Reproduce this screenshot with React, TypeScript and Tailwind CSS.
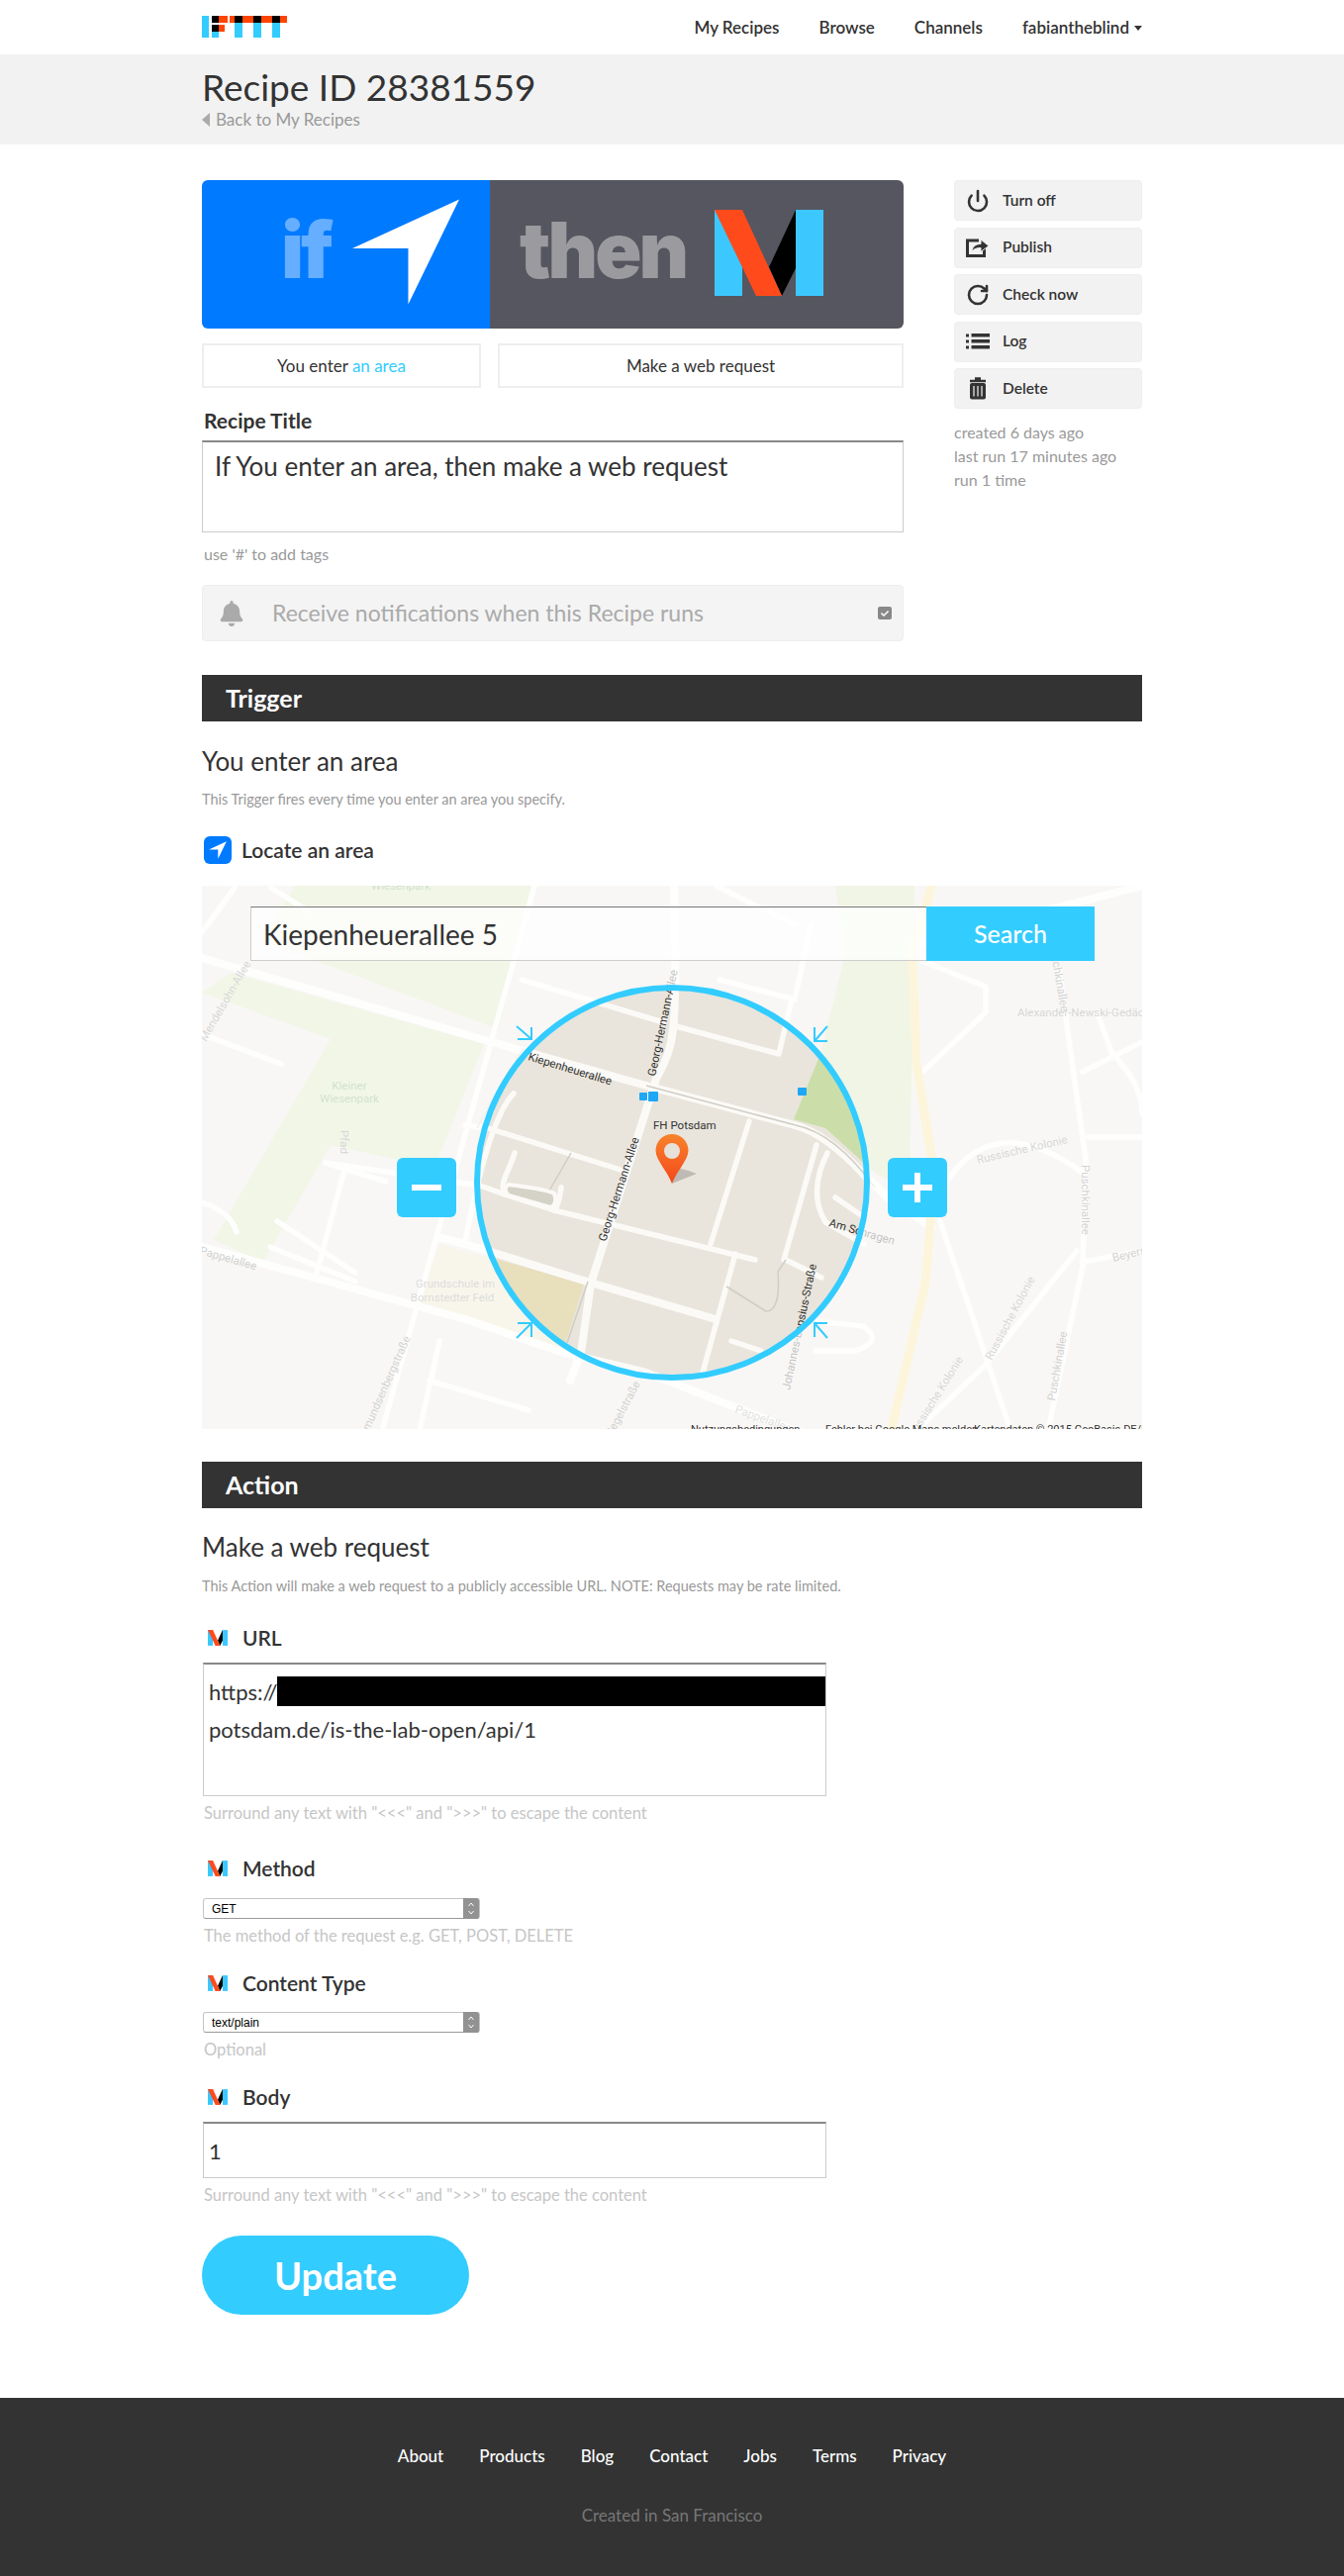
import { FaBell, FaCheck } from "react-icons/fa";
import { Power, RotateCw } from "lucide-react";

const blue = "#33ccff";

function Logo() {
    return (
        <svg width="87" height="23" viewBox="0 0 87 23" className="block">
            <rect x="0" y="0" width="7" height="22" fill="#33ccff" />
            <rect x="10" y="0" width="7" height="7" fill="#000" />
            <rect x="17" y="0" width="9" height="7" fill="#ff4400" />
            <rect x="10" y="9" width="7" height="7" fill="#000" />
            <rect x="17" y="9" width="6" height="7" fill="#ff4400" />
            <rect x="10" y="16" width="7" height="6" fill="#33ccff" />
            {[28, 47, 66].map((x) => (
                <g key={x}>
                    <rect x={x} y="0" width="20" height="7" fill="#ff4400" />
                    <rect x={x + 5} y="0" width="8" height="7" fill="#000" />
                    <rect x={x + 5} y="7" width="8" height="15" fill="#33ccff" />
                </g>
            ))}
        </svg>
    );
}

function MakerLogo({ className }: { className: string }) {
    return (
        <svg viewBox="0 0 110 87" className={className}>
            <rect x="0" y="0" width="28" height="87" fill="#3cc8ff" />
            <rect x="82" y="0" width="28" height="87" fill="#3cc8ff" />
            <polygon points="82,0 82,59 68,87 55,58" fill="#000" />
            <polygon points="0,0 28,0 68,87 42,87" fill="#ff4a1c" />
        </svg>
    );
}

function NavArrow({ className }: { className: string }) {
    return (
        <svg viewBox="0 0 110 107" className={className}>
            <polygon points="109,0 0,50 57,50 57,107" fill="#fff" />
        </svg>
    );
}

function PublishIcon() {
    return (
        <svg width="24" height="20" viewBox="0 0 24 20">
            <path d="M13 3H1.5v15.500h17V11" fill="none" stroke="#333" strokeWidth="3" />
            <path d="M6 14c.5-5 4-7.500 9-7.500V2l8 6.500-8 6V10.500c-4 0-7 1-9 3.500z" fill="#333" stroke="#f2f2f2" strokeWidth="1" />
        </svg>
    );
}

function ListIcon() {
    return (
        <svg width="24" height="16" viewBox="0 0 24 16">
            <rect x="0" y="0.500" width="3" height="3" fill="#333" />
            <rect x="0" y="6.500" width="3" height="3" fill="#333" />
            <rect x="0" y="12.500" width="3" height="3" fill="#333" />
            <rect x="5.500" y="0" width="18.500" height="3.500" fill="#333" />
            <rect x="5.500" y="6" width="18.500" height="3.500" fill="#333" />
            <rect x="5.500" y="12" width="18.500" height="3.500" fill="#333" />
        </svg>
    );
}

function TrashIcon() {
    return (
        <svg width="18" height="23" viewBox="0 0 18 23">
            <path d="M6 1.500h6M1 4h16" stroke="#333" strokeWidth="2.500" />
            <rect x="1" y="6" width="16" height="16.500" rx="2" fill="#333" />
            <path d="M5 9v10.500M9 9v10.500M13 9v10.500" stroke="#f2f2f2" strokeWidth="1.200" />
        </svg>
    );
}

const actions = [
    { label: "Turn off", icon: <Power size={24} strokeWidth={2.6} color="#333" /> },
    { label: "Publish", icon: <PublishIcon /> },
    { label: "Check now", icon: <RotateCw size={24} strokeWidth={2.6} color="#333" /> },
    { label: "Log", icon: <ListIcon /> },
    { label: "Delete", icon: <TrashIcon /> },
];

const mainRoads = [
    "M0 73L293 158L449 202L599 242Q630 250 669 292L694 316L737 345",
    "M477 0Q480 110 476 145Q474 170 459 195L393 402L383 472L372 500",
    "M0 365L266 438L366 472L449 492L608 554",
    "M238 355L266 362L389 400L519 438",
    "M718 60L950 0",
];

const sideRoads = [
    "M266 242L289 245L423 287",
    "M125 280L281 303L306 312L356 328L559 378",
    "M553 238L514 362",
    "M621 262L588 378",
    "M539 372L506 492",
    "M479 142L583 170L596 115",
    "M323 95L466 138",
    "M523 95L599 115L615 40",
    "M314 80L235 362L180 558",
    "M336 0L314 80",
    "M306 312C300 300 310 290 316 270",
    "M356 328C362 320 362 310 363 305",
    "M143 291L115 395",
    "M76 339L155 391",
    "M69 365L155 400",
    "M70 2L106 25",
    "M0 47L33 2",
    "M125 280L186 299",
    "M0 150L80 180",
    "M0 320Q30 330 35 350",
    "M315 210Q290 235 266 360",
    "M728 76L792 102L792 128L728 188",
    "M866 84L893 276L890 384L853 560",
    "M890 188L950 158",
    "M746 339L817 550",
    "M884 369L792 484L712 560",
    "M890 380L950 369",
    "M896 254L950 254",
    "M752 300Q800 225 890 290",
    "M590 378L626 396",
    "M632 270Q612 310 630 340L669 362",
    "M640 315L669 335",
    "M535 460L565 470",
    "M620 440L668 445Q690 460 660 470L620 470",
    "M230 500L330 530M240 460L220 550",
    "M520 0L599 40",
    "M905 130L920 170Q950 200 950 230",
];

const thinPaths = [
    "M278 245Q316 175 325 165",
    "M373 270L350 310",
    "M530 405L570 430Q585 430 582 390L590 378",
    "M449 202L600 242Q640 250 680 305",
    "M369 462L390 400",
];

const labels = [
    { x: 329, y: 176, r: 17, t: "Kiepenheuerallee" },
    { x: 408, y: 360, r: -72, t: "Georg-Hermann-Allee" },
    { x: 458, y: 193, r: -78, t: "Georg-Hermann-Allee" },
    { x: 456, y: 246, r: 0, t: "FH Potsdam" },
    { x: 633, y: 344, r: 16, t: "Am Schragen" },
    { x: 594, y: 510, r: -78, t: "Johannes-Lepsius-Straße" },
    { x: 538, y: 532, r: 20, t: "Pappelallee", c: "#999" },
    { x: 256, y: 406, r: 0, t: "Grundschule im", a: "middle", c: "#888" },
    { x: 253, y: 420, r: 0, t: "Bornstedter Feld", a: "middle", c: "#888" },
    { x: 149, y: 206, r: 0, t: "Kleiner", a: "middle", c: "#6b9a5a" },
    { x: 149, y: 219, r: 0, t: "Wiesenpark", a: "middle", c: "#6b9a5a" },
    { x: 201, y: 4, r: 0, t: "Wiesenpark", a: "middle", c: "#6b9a5a" },
    { x: 140, y: 247, r: 90, t: "Pfad", c: "#777" },
    { x: 824, y: 132, r: 0, t: "Alexander-Newski-Gedächtniskirche", c: "#777" },
    { x: 784, y: 281, r: -13, t: "Russische Kolonie", c: "#777" },
    { x: 889, y: 282, r: 90, t: "Puschkinallee", c: "#666" },
    { x: 921, y: 380, r: -14, t: "Beyerstraße", c: "#666" },
    { x: 798, y: 480, r: -62, t: "Russische Kolonie", c: "#777" },
    { x: 720, y: 558, r: -58, t: "Russische Kolonie", c: "#777" },
    { x: 862, y: 521, r: -80, t: "Puschkinallee", c: "#666" },
    { x: 414, y: 558, r: -62, t: "Hegelstraße", c: "#666" },
    { x: 166, y: 558, r: -66, t: "Amundsenbergstraße", c: "#666" },
    { x: -3, y: 372, r: 16, t: "Pappelallee", c: "#666" },
    { x: 4, y: 158, r: -60, t: "Mendelsohn-Allee", c: "#777" },
    { x: 856, y: 58, r: 80, t: "Puschkinallee", c: "#666" },
];

function MapArea() {
    const hole = "M0 0H950V550H0Z M278 300a197 197 0 1 0 394 0a197 197 0 1 0 -394 0Z";
    const arrows = [
        "M318 142L333 155M319 155H333V143",
        "M632 142L619 157M632 157H619V143",
        "M318 457L333 442M319 442H333V456",
        "M632 457L619 442M632 442H619V456",
    ];
    return (
        <svg viewBox="0 0 950 549" className="block w-full h-full font-[Roboto,sans-serif]">
            <defs>
                <linearGradient id="pin" x1="0" y1="0" x2="0" y2="1">
                    <stop offset="0" stopColor="#f8832c" />
                    <stop offset="1" stopColor="#f4471a" />
                </linearGradient>
            </defs>
            <rect width="950" height="549" fill="#e9e5dc" />
            <polygon points="94,0 336,0 300,145 60,55" fill="#cfdfb0" />
            <polygon points="30,88 285,160 235,285 130,262 62,380 12,358 130,155 0,108" fill="#cfdfb0" />
            <polygon points="625,170 650,70 640,0 720,0 715,310 680,290 630,245 598,236" fill="#cbdeaa" />
            <polygon points="240,362 386,402 365,470 215,425" fill="#e8dfbc" />
            <g fill="none" stroke="#fbfaf7" strokeLinecap="round" strokeLinejoin="round">
                <g strokeWidth="5.500">
                    {sideRoads.map((d) => <path key={d} d={d} />)}
                </g>
                <g strokeWidth="8">
                    {mainRoads.map((d) => <path key={d} d={d} />)}
                </g>
            </g>
            <g fill="none" stroke="#d0cdc3" strokeWidth="1.500">
                {thinPaths.map((d) => <path key={d} d={d} />)}
            </g>
            <rect x="300" y="310" width="0" height="0" />
            <path d="M737 0L718 69L722 180L740 291L731 402L694 560" fill="none" stroke="#f5dd86" strokeWidth="9" />
            <path d="M356 311Q350 307 310 302Q303 306 310 313L352 325Q360 322 356 311Z" fill="#d5d2c8" stroke="#fbfaf7" strokeWidth="4" />
            <g fontSize="11.500" fill="#333">
                {labels.map((l) => (
                    <text
                        key={l.t + l.x}
                        x={l.x}
                        y={l.y}
                        fill={l.c}
                        textAnchor={l.a}
                        transform={l.r ? `rotate(${l.r} ${l.x} ${l.y})` : undefined}
                    >
                        {l.t}
                    </text>
                ))}
            </g>
            <rect x="442" y="209" width="8" height="8" rx="1" fill="#1ea7f5" />
            <rect x="451" y="208" width="10" height="10" rx="1" fill="#1ea7f5" />
            <rect x="602" y="204" width="9" height="8" rx="1" fill="#1ea7f5" />
            <path d={hole} fill="#fff" fillOpacity="0.7" fillRule="evenodd" />
            <circle cx="475" cy="300" r="197" fill="none" stroke={blue} strokeWidth="6" />
            <g fill="none" stroke={blue} strokeWidth="2">
                {arrows.map((d) => <path key={d} d={d} />)}
            </g>
            <path d="M475 301L500 291Q490 287 480 285Z" fill="#000" fillOpacity="0.18" />
            <path d="M475 301C470 288 458.500 277 458.500 267.500A16.500 16.500 0 0 1 491.500 267.500C491.500 277 480 288 475 301Z" fill="url(#pin)" />
            <circle cx="475" cy="268" r="8" fill="#e6e2da" />
            <text x="494" y="553" fontSize="11" fill="#333">Nutzungsbedingungen</text>
            <text x="630" y="553" fontSize="11" fill="#333">Fehler bei Google Maps melden</text>
            <text x="780" y="553" fontSize="11" fill="#333">Kartendaten © 2015 GeoBasis-DE/BKG</text>
        </svg>
    );
}

function SectionBar({ title }: { title: string }) {
    return (
        <div className="flex h-[47px] items-center bg-[#333333] pl-6 text-[25px] font-bold text-white">
            {title}
        </div>
    );
}

function FieldLabel({ children, className }: { children: string; className: string }) {
    return (
        <div className={`flex h-7 items-center ${className}`}>
            <MakerLogo className="ml-[6px] mr-[15px] h-4 w-[20px]" />
            <span className="text-[21px] font-semibold leading-7 text-[#333]">{children}</span>
        </div>
    );
}

function SelectBox({ value, className }: { value: string; className: string }) {
    return (
        <div className={`ml-px flex h-[21px] w-[280px] items-center justify-between rounded-[3px] border border-[#c4c4c4] border-b-[#9a9a9a] bg-white pl-2 text-xs text-black font-[Liberation_Sans,sans-serif] ${className}`}>
            <span>{value}</span>
            <span className="flex h-[21px] w-4 flex-col items-center justify-center rounded-r-[3px] bg-[#929292] text-[7px] leading-[8px] text-white">
                <svg width="8" height="15" viewBox="0 0 8 15" fill="none" stroke="#fff" strokeWidth="1">
                    <path d="M1.500 5L4 2L6.500 5M1.500 10L4 13L6.500 10" />
                </svg>
            </span>
        </div>
    );
}

function Hint({ children, className }: { children: string; className: string }) {
    return <p className={`ml-[2px] text-[16.500px] leading-5 text-[#c6c6c6] ${className}`}>{children}</p>;
}

export default function App() {
    const footerLinks = ["About", "Products", "Blog", "Contact", "Jobs", "Terms", "Privacy"];

    return (
        <div className="flex min-h-[2603px] flex-col bg-white font-[Lato,sans-serif] text-[#333]">
            <header className="mx-auto flex h-[55px] w-[950px] items-center justify-between">
                <Logo />
                <nav className="flex items-center gap-10 text-[17px] font-semibold">
                    <span>My Recipes</span>
                    <span>Browse</span>
                    <span>Channels</span>
                    <span className="flex items-center gap-[5px]">
                        fabiantheblind
                        <span className="mt-[2px] border-x-[4px] border-t-[5px] border-x-transparent border-t-[#333]" />
                    </span>
                </nav>
            </header>

            <div className="h-[91px] bg-[#f2f2f2]">
                <div className="mx-auto w-[950px] pt-[10px]">
                    <h1 className="text-[37px] font-normal leading-[46px] text-[#333]">Recipe ID 28381559</h1>
                    <div className="flex items-center gap-[6px] text-[17px] leading-5 text-[#999]">
                        <span className="border-y-[7px] border-r-[8px] border-y-transparent border-r-[#aaa]" />
                        Back to My Recipes
                    </div>
                </div>
            </div>

            <main className="mx-auto w-[950px] pt-9">
                <div className="flex justify-between">
                    <div className="w-[709px]">
                        <div className="flex h-[150px] overflow-hidden rounded-md">
                            <div className="relative flex w-[291px] items-center bg-[#007aff]">
                                <span className="absolute left-[80px] top-[26px] font-[Inter,sans-serif] text-[78px] font-black leading-[90px] tracking-[-3px] text-[#66aeff]">if</span>
                                <NavArrow className="absolute left-[152px] top-[19px] h-[107px] w-[109px]" />
                            </div>
                            <div className="relative flex-1 bg-[#565660]">
                                <span className="absolute left-[30px] top-[26px] font-[Inter,sans-serif] text-[78px] font-black leading-[90px] tracking-[-3px] text-[#9a9a9f]">then</span>
                                <MakerLogo className="absolute left-[227px] top-[30px] h-[87px] w-[110px]" />
                            </div>
                        </div>

                        <div className="mt-[15px] flex justify-between text-[17px]">
                            <div className="flex h-[45px] w-[282px] items-center justify-center border-2 border-[#eeeeee]">
                                <span>You enter <span className="text-[#33ccff]">an area</span></span>
                            </div>
                            <div className="flex h-[45px] w-[410px] items-center justify-center border-2 border-[#eeeeee]">
                                Make a web request
                            </div>
                        </div>

                        <label className="ml-[2px] mt-[22px] block text-[21px] font-bold leading-[22px]">Recipe Title</label>
                        <div className="mt-[9px] h-[93px] border border-t-2 border-[#cccccc] border-t-[#888888] px-3 pt-2 text-[26px] leading-8">
                            If You enter an area, then make a web request
                        </div>
                        <p className="ml-[2px] mt-3 text-[16px] leading-5 text-[#999]">use '#' to add tags</p>

                        <div className="mt-[21px] flex h-[57px] items-center rounded border border-[#eeeeee] bg-[#f4f4f4] pl-4 pr-[11px] text-[23px] text-[#aaaaaa]">
                            <FaBell size={26} className="text-[#aaaaaa]" />
                            <span className="ml-[28px] flex-1">Receive notifications when this Recipe runs</span>
                            <span className="flex h-[13px] w-[14px] items-center justify-center rounded-[2px] bg-[#888888]">
                                <FaCheck size={8} className="text-white" />
                            </span>
                        </div>
                    </div>

                    <aside className="w-[190px]">
                        <div className="flex flex-col gap-[6.500px]">
                            {actions.map((a) => (
                                <div key={a.label} className="flex h-[41px] items-center rounded border border-[#eeeeee] bg-[#f2f2f2] text-[15.500px] font-semibold">
                                    <span className="flex w-[47px] justify-center pl-[2px] pr-[3px]">{a.icon}</span>
                                    <span className="ml-[1px]">{a.label}</span>
                                </div>
                            ))}
                        </div>
                        <div className="mt-[12px] text-[16px] leading-6 text-[#999]">
                            <p>created 6 days ago</p>
                            <p>last run 17 minutes ago</p>
                            <p>run 1 time</p>
                        </div>
                    </aside>
                </div>

                <div className="mt-[34px]">
                    <SectionBar title="Trigger" />
                </div>
                <h2 className="mt-[25px] text-[26px] font-normal leading-[30px]">You enter an area</h2>
                <p className="mt-[14px] text-[14.500px] leading-5 text-[#999]">This Trigger fires every time you enter an area you specify.</p>

                <div className="mt-[27px] flex h-7 items-center">
                    <span className="ml-[2px] flex h-7 w-7 items-center justify-center rounded-md bg-[#007aff]">
                        <NavArrow className="h-[18px] w-[18px]" />
                    </span>
                    <span className="ml-[10px] text-[21px] font-semibold">Locate an area</span>
                </div>

                <div className="relative mt-[22px] h-[549px] overflow-hidden">
                    <MapArea />
                    <div className="absolute left-[49px] top-[21px] flex h-[55px] w-[853px] border border-t-[#777777] border-[#cccccc] bg-white/75">
                        <span className="flex flex-1 items-center pl-3 text-[28px] text-[#333]">Kiepenheuerallee 5</span>
                        <span className="-m-px flex w-[170px] items-center justify-center bg-[#33ccff] text-[25px] font-medium text-white">Search</span>
                    </div>
                    <div className="absolute left-[197px] top-[275px] flex h-[60px] w-[60px] items-center justify-center rounded-md bg-[#33ccff]">
                        <span className="h-[6px] w-[30px] bg-white" />
                    </div>
                    <div className="absolute left-[693px] top-[275px] flex h-[60px] w-[60px] items-center justify-center rounded-md bg-[#33ccff]">
                        <span className="relative h-[6px] w-[30px] bg-white">
                            <span className="absolute left-3 top-[-12px] h-[30px] w-[6px] bg-white" />
                        </span>
                    </div>
                </div>

                <div className="mt-[33px]">
                    <SectionBar title="Action" />
                </div>
                <h2 className="mt-6 text-[26px] font-normal leading-[30px]">Make a web request</h2>
                <p className="mt-[15px] text-[14.500px] leading-5 text-[#999]">This Action will make a web request to a publicly accessible URL. NOTE: Requests may be rate limited.</p>

                <FieldLabel className="mt-7">URL</FieldLabel>
                <div className="ml-px mt-[11px] h-[135px] w-[630px] border border-t-2 border-[#cccccc] border-t-[#888888] pl-[5px] pt-3 text-[22px] leading-[39px]">
                    <div className="flex h-[30px] items-center">
                        <span>https://</span>
                        <span className="h-[30px] flex-1 bg-black" />
                    </div>
                    <div className="mt-[4px]">potsdam.de/is-the-lab-open/api/1</div>
                </div>
                <Hint className="mt-[7px]">Surround any text with "&lt;&lt;&lt;" and "&gt;&gt;&gt;" to escape the content</Hint>

                <FieldLabel className="mt-8">Method</FieldLabel>
                <SelectBox value="GET" className="mt-4" />
                <Hint className="mt-[7px]">The method of the request e.g. GET, POST, DELETE</Hint>

                <FieldLabel className="mt-6">Content Type</FieldLabel>
                <SelectBox value="text/plain" className="mt-[15px]" />
                <Hint className="mt-[7px]">Optional</Hint>

                <FieldLabel className="mt-6">Body</FieldLabel>
                <div className="ml-px mt-[11px] flex h-[57px] w-[630px] items-center border border-t-2 border-[#cccccc] border-t-[#888888] pl-[5px] text-[22px]">1</div>
                <Hint className="mt-[7px]">Surround any text with "&lt;&lt;&lt;" and "&gt;&gt;&gt;" to escape the content</Hint>

                <button className="mt-[31px] block h-20 w-[270px] rounded-full bg-[#33ccff] text-[38px] font-bold text-white">Update</button>
            </main>

            <footer className="mt-[84px] h-[180px] bg-[#333333] pt-[49px] text-center">
                <div className="flex justify-center gap-9 text-[17px] font-medium leading-5 text-white">
                    {footerLinks.map((link) => <span key={link}>{link}</span>)}
                </div>
                <p className="mt-10 text-[17px] leading-5 text-[#777777]">Created in San Francisco</p>
            </footer>
        </div>
    );
}
